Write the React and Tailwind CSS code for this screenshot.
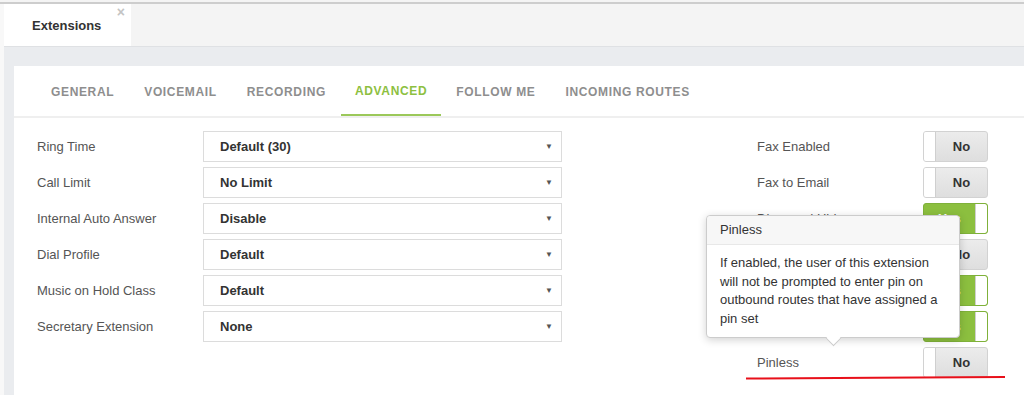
// App.jsx — Extensions / Advanced settings with Pinless tooltip
const font = { fontFamily: '"Liberation Sans", Arial, sans-serif' };

const tabs = ["General", "Voicemail", "Recording", "Advanced", "Follow Me", "Incoming Routes"];

const selects = [
  ["Ring Time", "Default (30)"],
  ["Call Limit", "No Limit"],
  ["Internal Auto Answer", "Disable"],
  ["Dial Profile", "Default"],
  ["Music on Hold Class", "Default"],
  ["Secretary Extension", "None"],
];

const toggles = [
  ["Fax Enabled", false],
  ["Fax to Email", false],
  ["Disregard Hide", true],
  ["Call Waiting", false],
  ["Call Forward", true],
  ["Do Not Disturb", true],
  ["Pinless", false],
];

function Toggle({ on }) {
  if (on) {
    return (
      <div className="flex h-[31px] w-[65px] overflow-hidden rounded-[3px] border border-[#7fb13a] bg-[#8cbf3f]">
        <div className="flex flex-1 items-center justify-center text-[13px] font-bold text-white">Yes</div>
        <div className="w-[12px] rounded-r-[2px] border-l border-[#cfcfcf] bg-white" />
      </div>
    );
  }
  return (
    <div className="flex h-[31px] w-[65px] overflow-hidden rounded-[3px] border border-[#d2d2d2] bg-gradient-to-b from-[#ececec] to-[#dedede]">
      <div className="w-[12px] border-r border-[#cfcfcf] bg-white" />
      <div className="flex flex-1 items-center justify-center text-[13px] font-bold text-[#333]">No</div>
    </div>
  );
}

export default function App() {
  return (
    <div className="relative h-[395px] w-[1024px] overflow-hidden bg-[#f8f8f8]" style={font}>
      {/* top edge */}
      <div className="h-[2px] bg-[#f4f4f4]" />
      <div className="h-[2px] bg-[#cdcdcd]" />

      <div className="ml-[4px]">
        {/* tab strip */}
        <div className="flex h-[43px] border-b border-[#dfe1e4] bg-[#f4f4f4]">
          <div className="relative flex w-[127px] items-center bg-white pl-[28px] pt-[2px] text-[13px] font-bold text-[#333]">
            Extensions
            <span className="absolute right-[6px] top-[1px] text-[14px] leading-none text-[#c4c4c4]">×</span>
          </div>
        </div>

        {/* content area */}
        <div className="h-[400px] bg-[#eaecef] pl-[10px] pt-[19px]">
          <div className="h-full bg-white">
            {/* section tabs */}
            <div className="border-b-2 border-[#efefef] pl-[22px]">
              <div className="flex h-[50px]">
                {tabs.map((t) => (
                  <div
                    key={t}
                    className={
                      t === "Advanced"
                        ? "flex items-center border-b-2 border-[#9bc85a] px-[14px] pt-[2px] text-[12px] font-bold uppercase tracking-[0.65px] text-[#8dc03f]"
                        : "flex items-center px-[15px] pt-[2px] text-[12px] font-bold uppercase tracking-[0.65px] text-[#8e8e8e]"
                    }
                  >
                    {t}
                  </div>
                ))}
              </div>
            </div>

            {/* form */}
            <div className="flex justify-between pl-[23px] pr-[36px] pt-[13px]">
              <div className="flex flex-col gap-[5px]">
                {selects.map(([label, value]) => (
                  <div key={label} className="flex h-[31px] items-center">
                    <div className="w-[166px] text-[13px] text-[#555]">{label}</div>
                    <div className="flex h-[31px] w-[359px] items-center justify-between border border-[#dcdcdc] pl-[16px] pr-[8px]">
                      <span className="text-[13px] font-bold text-[#333]">{value}</span>
                      <span className="text-[8px] text-[#555]">▼</span>
                    </div>
                  </div>
                ))}
              </div>

              <div className="flex flex-col gap-[5px]">
                {toggles.map(([label, on]) => (
                  <div key={label} className="flex h-[31px] items-center">
                    <div className="w-[166px] text-[13px] text-[#555]">{label}</div>
                    <Toggle on={on} />
                  </div>
                ))}
              </div>
            </div>
          </div>
        </div>
      </div>

      {/* tooltip */}
      <div className="absolute left-[706px] top-[215px] w-[254px] rounded-[4px] border border-[#cccccc] bg-white shadow-[0_2px_8px_rgba(0,0,0,0.18)]">
        <div className="flex h-[29px] items-center rounded-t-[4px] border-b border-[#e8e8e8] bg-[#f7f7f7] px-[13px] text-[13px] text-[#333]">
          Pinless
        </div>
        <div className="pb-[9px] pl-[13px] pr-[20px] pt-[9px] text-[13px] leading-[18.5px] text-[#333]">
          If enabled, the user of this extension will not be prompted to enter pin on outbound routes that have assigned a pin set
        </div>
        <div className="absolute -bottom-[7px] left-[121px] h-[11px] w-[11px] rotate-45 border-b border-r border-[#cccccc] bg-white" />
      </div>

      {/* red underline */}
      <svg className="absolute left-[745px] top-[374px]" width="262" height="8" viewBox="0 0 262 8">
        <path d="M1 4.5 Q 60 4.2 130 3.8 T 260 3" stroke="#e8101a" strokeWidth="2" fill="none" />
      </svg>
    </div>
  );
}
